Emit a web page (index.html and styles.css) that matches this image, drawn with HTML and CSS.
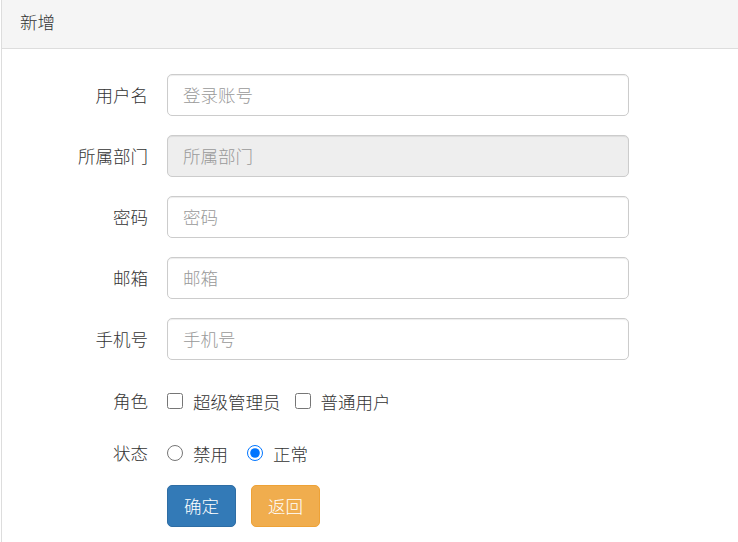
FILE: index.html
```html
<!DOCTYPE html>
<html lang="zh-CN">
<head>
<meta charset="utf-8">
<title>新增</title>
<link rel="stylesheet" href="styles.css">
</head>
<body>
<div class="panel">
  <div class="panel-heading">新增</div>
  <div class="panel-body">
    <form class="form">
      <div class="row">
        <label class="label">用户名</label>
        <input class="control" type="text" placeholder="登录账号">
      </div>
      <div class="row">
        <label class="label">所属部门</label>
        <input class="control" type="text" placeholder="所属部门" disabled>
      </div>
      <div class="row">
        <label class="label">密码</label>
        <input class="control" type="password" placeholder="密码">
      </div>
      <div class="row">
        <label class="label">邮箱</label>
        <input class="control" type="text" placeholder="邮箱">
      </div>
      <div class="row">
        <label class="label">手机号</label>
        <input class="control" type="text" placeholder="手机号">
      </div>
      <div class="row row-check">
        <span class="label">角色</span>
        <div class="options">
          <label class="opt"><input type="checkbox" class="box">超级管理员</label>
          <label class="opt"><input type="checkbox" class="box">普通用户</label>
        </div>
      </div>
      <div class="row row-radio">
        <span class="label">状态</span>
        <div class="options">
          <label class="opt"><input type="radio" name="status" class="rad">禁用</label>
          <label class="opt opt-wide"><input type="radio" name="status" class="rad" checked>正常</label>
        </div>
      </div>
      <div class="row row-btn">
        <span class="label"></span>
        <div class="buttons">
          <button type="button" class="btn btn-primary">确定</button>
          <button type="button" class="btn btn-warning">返回</button>
        </div>
      </div>
    </form>
  </div>
</div>
</body>
</html>
```
FILE: styles.css
```css
html, body {
  margin: 0;
  padding: 0;
  background: #fff;
  overflow: hidden;
}
body {
  font-family: "Microsoft YaHei", "Noto Sans CJK SC", "Liberation Sans", sans-serif;
  font-size: 17.5px;
  font-weight: 300;
  color: #333;
}
.panel {
  width: 760px;
  height: 560px;
  margin-left: 1px;
  border-left: 1px solid #ddd;
  box-sizing: border-box;
}
.panel-heading {
  height: 48px;
  background: #f5f5f5;
  border-bottom: 1px solid #ddd;
  box-sizing: content-box;
  padding-left: 18px;
  line-height: 44px;
  font-size: 17.5px;
  color: #333;
}
.panel-body {
  padding-top: 25px;
}
.form {
  display: flex;
  flex-direction: column;
}
.row {
  display: grid;
  grid-template-columns: 146px 462px;
  column-gap: 19px;
  align-items: center;
  height: 42px;
  margin-bottom: 19px;
}
.label {
  text-align: right;
  color: #333;
  line-height: 40px;
}
.control {
  box-sizing: border-box;
  height: 42px;
  width: 462px;
  border: 1px solid #ccc;
  border-radius: 5px;
  padding: 0 15px 2px;
  font-family: inherit;
  font-size: 17.5px;
  font-weight: 300;
  color: #555;
  background: #fff;
  box-shadow: inset 0 1px 1px rgba(0,0,0,.075);
  outline: none;
}
.control::placeholder {
  color: #999;
}
.control:disabled {
  background: #eee;
}
.row-check {
  height: 44px;
  margin-bottom: 8px;
}
.row-radio {
  height: 44px;
  margin-bottom: 10px;
}
.row-btn {
  height: 42px;
  margin-bottom: 0;
}
.options {
  display: flex;
  align-items: center;
  gap: 14px;
}
.opt {
  display: flex;
  align-items: center;
  gap: 10px;
  color: #333;
}
.opt-wide {
  margin-left: 5px;
}
.box {
  width: 16px;
  height: 16px;
  margin: 0;
}
.rad {
  width: 16px;
  height: 16px;
  margin: 0;
  accent-color: #0075ff;
}
.buttons {
  display: flex;
  gap: 15px;
}
.btn {
  height: 42px;
  padding: 0 16px 2px;
  border: 1px solid transparent;
  border-radius: 5px;
  font-family: inherit;
  font-size: 17.5px;
  font-weight: 300;
  color: #fff;
  cursor: pointer;
}
.btn-primary {
  background: #337ab7;
  border-color: #2e6da4;
}
.btn-warning {
  background: #f0ad4e;
  border-color: #eea236;
}
```
